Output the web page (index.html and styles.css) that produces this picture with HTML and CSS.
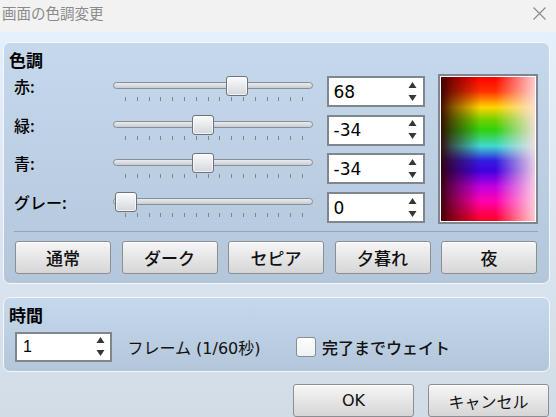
FILE: index.html
```html
<!DOCTYPE html>
<html lang="ja">
<head>
<meta charset="utf-8">
<title>画面の色調変更</title>
<link rel="stylesheet" href="styles.css">
</head>
<body>
<div class="window">
  <div class="titlebar">
    <span class="title">画面の色調変更</span>
    <svg class="close" viewBox="0 0 13 13"><path d="M0.5 0.5L12.5 12.5M12.5 0.5L0.5 12.5"/></svg>
  </div>
  <div class="content">
    <section class="panel tone">
      <h2 class="panel-title">色調</h2>
      <div class="tone-grid">
        <div class="preview"><div class="preview-img"></div></div>

        <div class="label">赤:</div>
        <div class="slider"><div class="track"></div><div class="ticks"></div><div class="thumb" style="left:113px"></div></div>
        <div class="spin"><span class="spin-value">68</span><svg class="arrows" viewBox="0 0 9 20"><path d="M0.5 6L4.5 0L8.5 6Z M0.5 13L4.5 19L8.5 13Z"/></svg></div>

        <div class="label">緑:</div>
        <div class="slider"><div class="track"></div><div class="ticks"></div><div class="thumb" style="left:79px"></div></div>
        <div class="spin"><span class="spin-value">-34</span><svg class="arrows" viewBox="0 0 9 20"><path d="M0.5 6L4.5 0L8.5 6Z M0.5 13L4.5 19L8.5 13Z"/></svg></div>

        <div class="label">青:</div>
        <div class="slider"><div class="track"></div><div class="ticks"></div><div class="thumb" style="left:79px"></div></div>
        <div class="spin"><span class="spin-value">-34</span><svg class="arrows" viewBox="0 0 9 20"><path d="M0.5 6L4.5 0L8.5 6Z M0.5 13L4.5 19L8.5 13Z"/></svg></div>

        <div class="label">グレー:</div>
        <div class="slider"><div class="track"></div><div class="ticks"></div><div class="thumb" style="left:2px"></div></div>
        <div class="spin"><span class="spin-value">0</span><svg class="arrows" viewBox="0 0 9 20"><path d="M0.5 6L4.5 0L8.5 6Z M0.5 13L4.5 19L8.5 13Z"/></svg></div>
      </div>
      <div class="separator"></div>
      <div class="presets">
        <button class="btn">通常</button>
        <button class="btn">ダーク</button>
        <button class="btn">セピア</button>
        <button class="btn">夕暮れ</button>
        <button class="btn">夜</button>
      </div>
    </section>

    <section class="panel time">
      <h2 class="panel-title">時間</h2>
      <div class="time-row">
        <div class="spin time-spin"><span class="spin-value small">1</span><svg class="arrows" viewBox="0 0 9 20"><path d="M0.5 6L4.5 0L8.5 6Z M0.5 13L4.5 19L8.5 13Z"/></svg></div>
        <span class="frame-label">フレーム (1/60秒)</span>
        <span class="checkbox"></span>
        <span class="check-label">完了までウェイト</span>
      </div>
    </section>

    <div class="footer">
      <button class="btn dialog-btn">OK</button>
      <button class="btn dialog-btn">キャンセル</button>
    </div>
  </div>
</div>
</body>
</html>
```

FILE: styles.css
```css
* { box-sizing: border-box; }

html, body {
  margin: 0;
  padding: 0;
}

body {
  width: 556px;
  height: 417px;
  overflow: hidden;
  font-family: "DejaVu Sans", "Noto Sans CJK JP", sans-serif;
  color: #111;
  background: #dde7f2;
}

.window {
  height: 417px;
  display: flex;
  flex-direction: column;
}

.titlebar {
  height: 32px;
  flex: none;
  background: #f2f2f2;
  display: flex;
  align-items: center;
  justify-content: space-between;
  padding: 0 10px 6px 2px;
}

.title {
  font-family: "Noto Sans CJK JP", sans-serif;
  font-size: 14.5px;
  line-height: 20px;
  color: #8a8a8a;
}

.close {
  width: 13px;
  height: 13px;
  fill: none;
  stroke: #8c8c8c;
  stroke-width: 1.2;
}

.content {
  flex: 1;
  background: linear-gradient(#e4f0fc, #d2dce7);
  padding: 10px 6px 0 3px;
}

.panel {
  border: 1px solid #f3f8fd;
  border-radius: 7px;
  background: linear-gradient(#c5d8ec, #b4c6da);
  padding: 5px 11px 9px 5px;
}

.panel-title {
  margin: 0;
  font-family: "Noto Sans CJK JP", sans-serif;
  font-size: 17px;
  font-weight: bold;
  line-height: 24px;
  color: #000;
}

.tone-grid {
  margin: 4px 0 0 5px;
  display: grid;
  grid-template-columns: 85.5px 200px 98px 100px;
  grid-template-rows: repeat(4, 31px);
  column-gap: 13.5px;
  row-gap: 7.7px;
}

.label {
  grid-column: 1;
  font-family: "Noto Sans CJK JP", sans-serif;
  font-size: 16px;
  font-weight: 500;
  line-height: 20px;
  color: #000;
}

.slider {
  grid-column: 2;
  position: relative;
  height: 31px;
}

.track {
  margin-top: 6px;
  height: 7px;
  border: 1px solid #878e97;
  border-radius: 4px;
  background: linear-gradient(#e9ecef, #c8cdd3);
}

.ticks {
  margin: 8px 0 0 12px;
  width: 178px;
  height: 4px;
  background: repeating-linear-gradient(to right, #7b8694 0 1px, transparent 1px 11.8px);
}

.thumb {
  position: absolute;
  top: 0;
  width: 22px;
  height: 20px;
  border: 1px solid #6c737c;
  border-radius: 3px;
  background: linear-gradient(#fbfbfc, #d3d7dc);
  box-shadow: inset 0 0 0 1px rgba(255, 255, 255, 0.7);
}

.spin {
  grid-column: 3;
  display: flex;
  align-items: center;
  justify-content: space-between;
  height: 31px;
  border: 2px solid #80868e;
  background: #fff;
  padding: 0 6px 0 5px;
  font-size: 17px;
  color: #000;
}

.arrows {
  width: 9px;
  height: 20px;
  fill: #363636;
}

.preview {
  grid-column: 4;
  grid-row: 1 / 5;
  margin: -2px 0 -1px 0;
  border: 2px solid #80868e;
  padding: 1px;
  background: #fff;
  display: flex;
}

.preview-img {
  flex: 1;
  background:
    linear-gradient(to right,
      rgba(50, 0, 0, 0.92) 0%,
      rgba(50, 0, 0, 0.6) 12%,
      rgba(0, 0, 0, 0) 42%,
      rgba(255, 230, 230, 0) 58%,
      rgba(255, 225, 228, 0.9) 100%),
    linear-gradient(to bottom,
      #ff0000 0%,
      #ff3000 10%,
      #ffd400 21%,
      #70d000 30%,
      #30d010 37%,
      #40d8d0 48%,
      #3020e0 58%,
      #4000e0 65%,
      #c000e0 76%,
      #ff00b0 86%,
      #ff0020 100%);
}

.separator {
  margin: 8px 0 0 5px;
  height: 1px;
  background: #93a5b8;
}

.presets {
  margin: 9px 1px 0 6px;
  display: grid;
  grid-template-columns: repeat(5, 1fr);
  column-gap: 10.5px;
}

.btn {
  height: 33px;
  margin: 0;
  padding: 0;
  border: 1px solid #8b8f94;
  border-radius: 3px;
  background: linear-gradient(#f6f6f6, #d6d6d6);
  box-shadow: inset 0 1px 0 #ffffff;
  font-family: "Noto Sans CJK JP", sans-serif;
  font-size: 17px;
  font-weight: 500;
  color: #111;
}

.time {
  margin-top: 13px;
}

.time-row {
  margin: 5px 0 0 6px;
  display: flex;
  align-items: center;
}

.time-spin {
  width: 97px;
  height: 30px;
  padding: 0 5px 0 6px;
}

.spin-value.small {
  font-family: "Liberation Sans", sans-serif;
  font-size: 16px;
}

.frame-label {
  width: 168px;
  margin-left: 15.5px;
  font-size: 16px;
  color: #111;
}

.checkbox {
  width: 20px;
  height: 20px;
  border: 1px solid #868d96;
  border-radius: 3px;
  background: linear-gradient(#ffffff, #eef0f2);
}

.check-label {
  margin-left: 6.5px;
  font-family: "Noto Sans CJK JP", sans-serif;
  font-size: 16px;
  font-weight: 500;
  color: #111;
}

.footer {
  margin-top: 12px;
  padding-right: 1px;
  display: flex;
  justify-content: flex-end;
  column-gap: 14px;
}

.dialog-btn {
  width: 121px;
  font-family: "DejaVu Sans", "Noto Sans CJK JP", sans-serif;
  font-size: 16px;
  font-weight: normal;
}
```
